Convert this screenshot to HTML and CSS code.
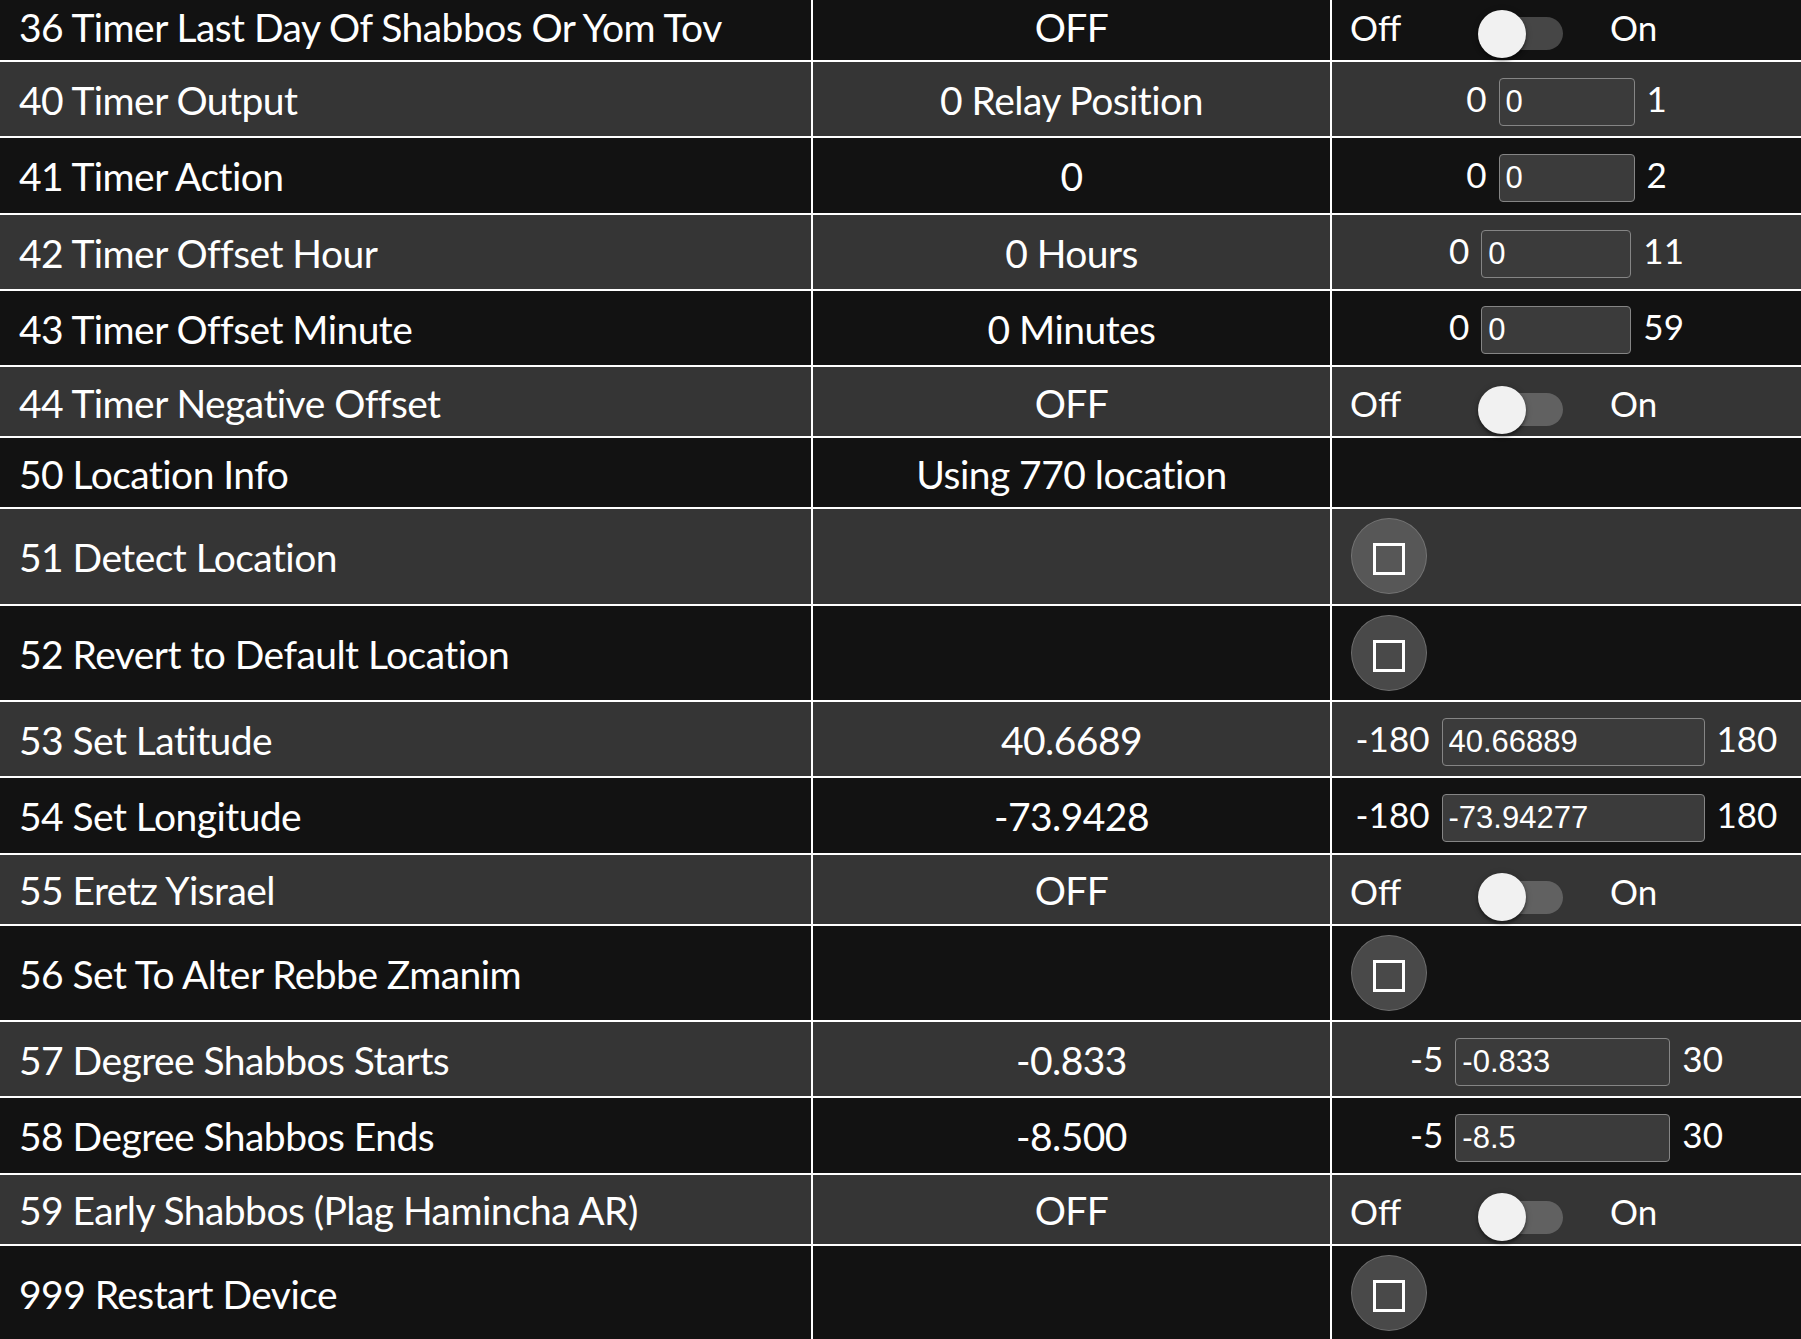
FILE: index.html
```html
<!DOCTYPE html>
<html lang="en">
<head>
<meta charset="utf-8">
<title>Device Settings</title>
<link rel="stylesheet" href="styles.css">
</head>
<body>
<div class="settings">

  <div class="row dark h-toggle">
    <div class="cell name">36 Timer Last Day Of Shabbos Or Yom Tov</div>
    <div class="cell value">OFF</div>
    <div class="cell ctrl toggle"><span class="off">Off</span><span class="switch"><span class="track"></span><span class="knob"></span></span><span class="on">On</span></div>
  </div>

  <div class="row light h-input">
    <div class="cell name">40 Timer Output</div>
    <div class="cell value">0 Relay Position</div>
    <div class="cell ctrl range"><div class="range-in"><span>0</span><input class="num w-xs" type="number" min="0" max="1" value="0"><span>1</span></div></div>
  </div>

  <div class="row dark h-input">
    <div class="cell name">41 Timer Action</div>
    <div class="cell value">0</div>
    <div class="cell ctrl range"><div class="range-in"><span>0</span><input class="num w-xs" type="number" min="0" max="2" value="0"><span>2</span></div></div>
  </div>

  <div class="row light h-input">
    <div class="cell name">42 Timer Offset Hour</div>
    <div class="cell value">0 Hours</div>
    <div class="cell ctrl range"><div class="range-in"><span>0</span><input class="num w-s" type="number" min="0" max="11" value="0"><span>11</span></div></div>
  </div>

  <div class="row dark h-input">
    <div class="cell name">43 Timer Offset Minute</div>
    <div class="cell value">0 Minutes</div>
    <div class="cell ctrl range"><div class="range-in"><span>0</span><input class="num w-s" type="number" min="0" max="59" value="0"><span>59</span></div></div>
  </div>

  <div class="row light h-toggle">
    <div class="cell name">44 Timer Negative Offset</div>
    <div class="cell value">OFF</div>
    <div class="cell ctrl toggle"><span class="off">Off</span><span class="switch"><span class="track"></span><span class="knob"></span></span><span class="on">On</span></div>
  </div>

  <div class="row dark h-toggle">
    <div class="cell name">50 Location Info</div>
    <div class="cell value">Using 770 location</div>
    <div class="cell ctrl"></div>
  </div>

  <div class="row light h-button">
    <div class="cell name">51 Detect Location</div>
    <div class="cell value"></div>
    <div class="cell ctrl action"><button class="round" type="button" aria-label="Detect Location"><span class="box"></span></button></div>
  </div>

  <div class="row dark h-button">
    <div class="cell name">52 Revert to Default Location</div>
    <div class="cell value"></div>
    <div class="cell ctrl action"><button class="round" type="button" aria-label="Revert to Default Location"><span class="box"></span></button></div>
  </div>

  <div class="row light h-input">
    <div class="cell name">53 Set Latitude</div>
    <div class="cell value">40.6689</div>
    <div class="cell ctrl range"><div class="range-in"><span>-180</span><input class="num w-l" type="number" step="any" min="-180" max="180" value="40.66889"><span>180</span></div></div>
  </div>

  <div class="row dark h-input">
    <div class="cell name">54 Set Longitude</div>
    <div class="cell value">-73.9428</div>
    <div class="cell ctrl range"><div class="range-in"><span>-180</span><input class="num w-l" type="number" step="any" min="-180" max="180" value="-73.94277"><span>180</span></div></div>
  </div>

  <div class="row light h-toggle">
    <div class="cell name">55 Eretz Yisrael</div>
    <div class="cell value">OFF</div>
    <div class="cell ctrl toggle"><span class="off">Off</span><span class="switch"><span class="track"></span><span class="knob"></span></span><span class="on">On</span></div>
  </div>

  <div class="row dark h-button">
    <div class="cell name">56 Set To Alter Rebbe Zmanim</div>
    <div class="cell value"></div>
    <div class="cell ctrl action"><button class="round" type="button" aria-label="Set To Alter Rebbe Zmanim"><span class="box"></span></button></div>
  </div>

  <div class="row light h-input">
    <div class="cell name">57 Degree Shabbos Starts</div>
    <div class="cell value">-0.833</div>
    <div class="cell ctrl range"><div class="range-in"><span>-5</span><input class="num w-m" type="number" step="any" min="-5" max="30" value="-0.833"><span>30</span></div></div>
  </div>

  <div class="row dark h-input">
    <div class="cell name">58 Degree Shabbos Ends</div>
    <div class="cell value">-8.500</div>
    <div class="cell ctrl range"><div class="range-in"><span>-5</span><input class="num w-m" type="number" step="any" min="-5" max="30" value="-8.5"><span>30</span></div></div>
  </div>

  <div class="row light h-toggle">
    <div class="cell name">59 Early Shabbos (Plag Hamincha AR)</div>
    <div class="cell value">OFF</div>
    <div class="cell ctrl toggle"><span class="off">Off</span><span class="switch"><span class="track"></span><span class="knob"></span></span><span class="on">On</span></div>
  </div>

  <div class="row dark h-button">
    <div class="cell name">999 Restart Device</div>
    <div class="cell value"></div>
    <div class="cell ctrl action"><button class="round" type="button" aria-label="Restart Device"><span class="box"></span></button></div>
  </div>

</div>
</body>
</html>
```

FILE: styles.css
```css
html, body {
  margin: 0;
  padding: 0;
  background: #121212;
}

body {
  overflow: hidden;
  color: #ffffff;
  font-family: Lato, "Open Sans", sans-serif;
}

.settings {
  margin-top: -9px;
  width: 1801px;
}

.row {
  display: grid;
  grid-template-columns: 813px 519px 1fr;
  border-bottom: 2px solid #ffffff;
}

.row.dark { background: #121212; }
.row.light { background: #353535; }

.h-toggle { height: 69px; }
.h-input { height: 74.25px; }
.h-button { height: 94.5px; }

.cell {
  box-sizing: border-box;
  display: flex;
  align-items: center;
  padding-top: 3px;
  min-width: 0;
}

.name, .value {
  border-right: 2px solid #ffffff;
  font-size: 39px;
  line-height: 47px;
  letter-spacing: -0.55px;
  white-space: nowrap;
}

.name {
  padding-left: 19px;
}

.value {
  justify-content: center;
}

.ctrl {
  font-size: 35px;
  line-height: 42px;
}

/* toggle */
.toggle {
  padding-left: 18px;
}

.toggle .off {
  width: 128px;
}

.switch {
  position: relative;
  width: 85px;
  height: 48px;
  margin-top: 13px;
  flex: none;
}

.track {
  position: absolute;
  left: 7px;
  top: 7.5px;
  width: 78px;
  height: 33px;
  border-radius: 16.5px;
  background: rgba(255, 255, 255, 0.22);
}

.knob {
  position: absolute;
  left: 0;
  top: 0;
  width: 48px;
  height: 48px;
  border-radius: 50%;
  background: #f1f1f1;
  box-shadow: 0 3px 3px rgba(0, 0, 0, 0.35), 0 1px 6px rgba(0, 0, 0, 0.25);
}

.toggle .on {
  margin-left: 47px;
}

/* numeric range */
.range {
  justify-content: center;
  padding-top: 4px;
}

.range-in {
  display: flex;
  align-items: baseline;
  gap: 12px;
}

.num {
  box-sizing: border-box;
  height: 48px;
  padding: 0 6px;
  margin: 0;
  border: 1.5px solid #858585;
  border-radius: 4px;
  background: #3b3b3b;
  color: #ffffff;
  font-family: "Liberation Sans", Arial, sans-serif;
  font-size: 31px;
  outline: none;
  -moz-appearance: textfield;
}

.num::-webkit-inner-spin-button,
.num::-webkit-outer-spin-button {
  -webkit-appearance: none;
  margin: 0;
}

.w-xs { width: 136px; }
.w-s { width: 150px; }
.w-m { width: 215px; }
.w-l { width: 263px; }

/* action button */
.action {
  padding-left: 19px;
  padding-top: 0;
}

.round {
  box-sizing: border-box;
  width: 76px;
  height: 76px;
  margin: 0;
  padding: 0;
  border-radius: 50%;
  border: 1.5px solid rgba(140, 140, 140, 0.55);
  background: rgba(110, 110, 110, 0.6);
  display: flex;
  align-items: center;
  justify-content: center;
  cursor: pointer;
}

.box {
  box-sizing: border-box;
  width: 32px;
  height: 32px;
  margin-top: 6px;
  border: 3px solid #ffffff;
}
```
